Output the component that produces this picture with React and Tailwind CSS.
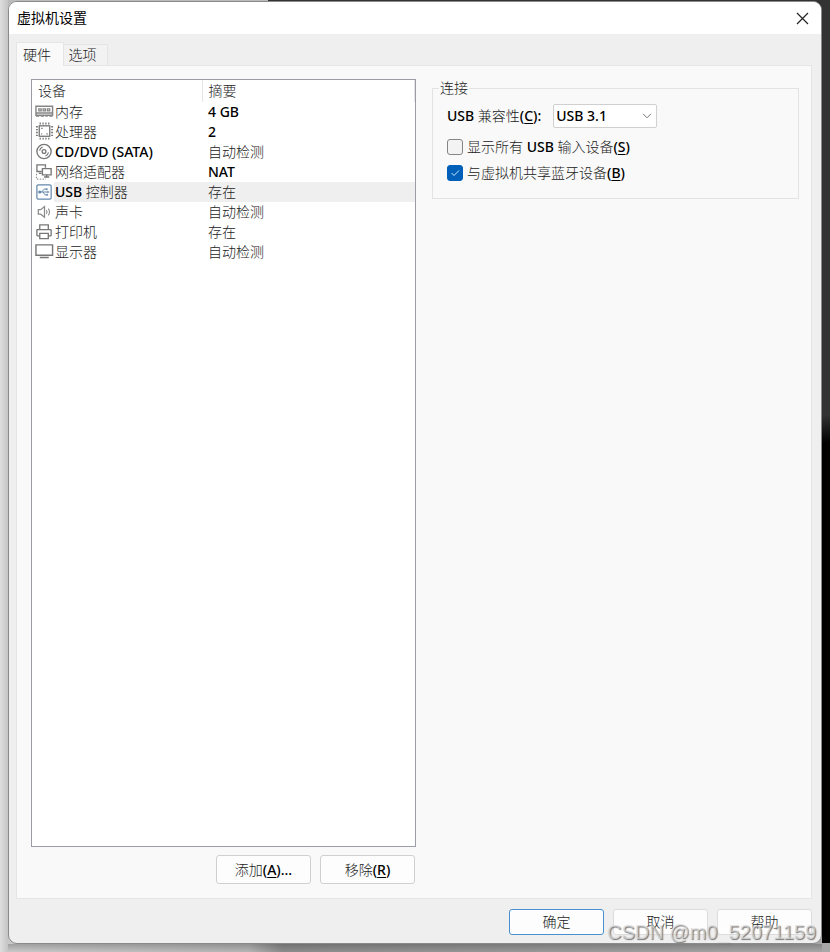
import { useState } from "react";

const sans = 'font-["Noto_Sans","Noto_Sans_CJK_SC",sans-serif]';

function MemoryIcon() {
  return (
    <svg width="20" height="18" viewBox="0 0 20 18" fill="none" stroke="#858585" strokeWidth="1.500">
      <path d="M1 3h17.500v9.500H1zM1 10h17.500" />
      <path d="M4 5.700h2.500v2H4zM8.500 5.700H11v2H8.500zM13 5.700h2.500v2H13z" strokeWidth="1.300" />
      <path d="M1 13h3.500M6 13h3.500M11 13h2.500M15 13h3.500" strokeWidth="1.800" />
    </svg>
  );
}

function CpuIcon() {
  return (
    <svg width="20" height="20" viewBox="0 1 20 20" fill="none" stroke="#777" strokeWidth="1.400">
      <rect x="4.500" y="4.500" width="11" height="11" />
      <path d="M5.500 1v2M8.500 1v2M11.500 1v2M14.500 1v2M5.500 17v2M8.500 17v2M11.500 17v2M14.500 17v2" />
      <path d="M1 5.500h2M1 8.500h2M1 11.500h2M1 14.500h2M17 5.500h2M17 8.500h2M17 11.500h2M17 14.500h2" />
      <path d="M6.500 7.200H8M12 13h1.500M6.500 13h1" />
    </svg>
  );
}

function DiscIcon() {
  return (
    <svg width="20" height="18" viewBox="0 0 20 18" fill="none" stroke="#777" strokeWidth="1.400">
      <circle cx="9.500" cy="8.500" r="7.500" />
      <circle cx="9.500" cy="8.500" r="2" />
      <path d="M4.800 7.500a5 5 0 0 1 3.200-3.700M14.200 9.500a5 5 0 0 1-3.200 3.700" strokeWidth="1.200" />
    </svg>
  );
}

function NetworkIcon() {
  return (
    <svg width="20" height="18" viewBox="0 0 20 18" fill="none" stroke="#777" strokeWidth="1.400">
      <path d="M7 8.500H2v-7h9v3M4 10.500h3" />
      <path d="M7.800 5.500h9.200v6.500H7.800z" fill="#fff" />
      <path d="M12.300 12v2M9.500 14.300h5.500" />
      <path d="M1.500 11v5.500h10" strokeDasharray="1.500 1.500" strokeWidth="1" />
    </svg>
  );
}

function UsbIcon() {
  return (
    <svg width="20" height="18" viewBox="0 0 20 18" fill="none" stroke="#6488ab" strokeWidth="1.300">
      <rect x="2" y="1.500" width="15" height="15" rx="1.500" />
      <path d="M4 9h10M7 9l2.500-3h2M8.500 9l2 3h1.500" strokeWidth="1" />
      <circle cx="5" cy="9" r="1" fill="#6488ab" />
      <path d="M11.500 5.300h1.500v1.400h-1.500zM12 11.300h1.500v1.400H12z" fill="#6488ab" strokeWidth="0.500" />
      <path d="M13 7.700 15.300 9 13 10.300z" fill="#6488ab" stroke="none" />
    </svg>
  );
}

function SoundIcon() {
  return (
    <svg width="20" height="18" viewBox="0 0 20 18" fill="none" stroke="#8a8a8a" strokeWidth="1.300">
      <path d="M3.500 6.500H6l4-3.300v11.300l-4-3.200H3.500z" />
      <path d="M12 7q1.400 2 0 4M14 5.500q2.600 3.500 0 7" strokeWidth="1.100" />
    </svg>
  );
}

function PrinterIcon() {
  return (
    <svg width="20" height="18" viewBox="0 0 20 18" fill="none" stroke="#777" strokeWidth="1.400">
      <path d="M5 6.500v-5h9v5M5 13H2.500q-.500 0-.500-.500V7q0-.500.500-.500h14q.500 0 .500.500v5.500q0 .500-.500.500H14" />
      <path d="M5 10.500h9v5.500H5z" />
    </svg>
  );
}

function DisplayIcon() {
  return (
    <svg width="20" height="18" viewBox="0 0 20 18" fill="none" stroke="#777" strokeWidth="1.500">
      <path d="M1 1.500h17.500v11H1z" />
      <path d="M5 14.800h9.500" strokeWidth="1.600" />
    </svg>
  );
}

const devices = [
  { name: "内存", summary: "4 GB", Icon: MemoryIcon },
  { name: "处理器", summary: "2", Icon: CpuIcon },
  { name: "CD/DVD (SATA)", summary: "自动检测", Icon: DiscIcon },
  { name: "网络适配器", summary: "NAT", Icon: NetworkIcon },
  { name: "USB 控制器", summary: "存在", Icon: UsbIcon },
  { name: "声卡", summary: "自动检测", Icon: SoundIcon },
  { name: "打印机", summary: "存在", Icon: PrinterIcon },
  { name: "显示器", summary: "自动检测", Icon: DisplayIcon },
];

// Chinese runs are drawn lighter than the Latin ones next to them
function Mixed({ text }) {
  return text.split(/([\u4e00-\u9fff]+)/).map((part, i) => (
    <span key={i} className={i % 2 ? "font-light text-[#222]" : "font-medium text-black"}>
      {part}
    </span>
  ));
}

function Accel({ letter }) {
  return (
    <span className="font-medium text-black">
      (<u className="underline-offset-2">{letter}</u>)
    </span>
  );
}

function DeviceTable() {
  const [selected, setSelected] = useState(4);

  return (
    <div className="flex-1 border border-[#9a9ca8] bg-white">
      <table className="w-full table-fixed border-collapse text-left leading-5">
        <colgroup>
          <col className="w-[22px]" />
          <col className="w-[148px]" />
          <col />
        </colgroup>
        <thead>
          <tr className="h-[22px]">
            <th colSpan={2} className="border-r border-[#e5e5e5] p-0 pl-1.5 font-light">
              <Mixed text="设备" />
            </th>
            <th className="border-r border-[#e5e5e5] p-0 pl-1.5 font-light">
              <Mixed text="摘要" />
            </th>
          </tr>
        </thead>
        <tbody>
          {devices.map(({ name, summary, Icon }, i) => (
            <tr key={name} className="h-5" onClick={() => setSelected(i)}>
              <td className="p-0 pl-[3px]">
                <div className="flex h-5 items-center">
                  <Icon />
                </div>
              </td>
              <td className={`p-0 pl-px whitespace-nowrap ${i === selected ? "bg-[#efefef]" : ""}`}>
                <Mixed text={name} />
              </td>
              <td className={`p-0 pl-1.5 ${i === selected ? "bg-[#efefef]" : ""}`}>
                <Mixed text={summary} />
              </td>
            </tr>
          ))}
        </tbody>
      </table>
    </div>
  );
}

function Button({ children, className = "h-[29px] border-[#d0d0d0]" }) {
  return (
    <button type="button" className={`w-[95px] rounded-[3px] border bg-[#fdfdfd] leading-5 ${className}`}>
      {children}
    </button>
  );
}

function CheckBox({ id, defaultChecked, children }) {
  return (
    <div className="flex h-[26px] items-center gap-1">
      <span className="grid">
        <input
          id={id}
          type="checkbox"
          defaultChecked={defaultChecked}
          className="peer col-start-1 row-start-1 size-4 appearance-none rounded-[3px] border border-[#858585] bg-[#f3f3f3] checked:border-[#005fb8] checked:bg-[#005fb8]"
        />
        <svg
          viewBox="0 0 16 16"
          className="pointer-events-none col-start-1 row-start-1 hidden size-4 peer-checked:block"
          fill="none"
          stroke="#d5e8f8"
        >
          <path d="M4.500 8 7 10.500 12 5.500" />
        </svg>
      </span>
      <label htmlFor={id}>{children}</label>
    </div>
  );
}

function ConnectionGroup() {
  return (
    <fieldset className="mt-px min-w-0 flex-1 self-start border border-[#e3e3e3] px-3.5 pb-3">
      <legend className="-ml-2 px-px leading-4">
        <Mixed text="连接" />
      </legend>
      <div className="flex items-center gap-3 pt-2 pb-1.5">
        <label htmlFor="usb-version" className="whitespace-nowrap">
          <Mixed text="USB 兼容性" />
          <Accel letter="C" />
          <span className="font-medium">:</span>
        </label>
        <div className="grid w-[104px] items-center">
          <select
            id="usb-version"
            defaultValue="3.1"
            className="col-start-1 row-start-1 h-6 appearance-none rounded-[2px] border border-[#d0d0d0] bg-white pl-0.5 leading-5 font-medium text-black"
          >
            <option value="1.1">USB 1.1</option>
            <option value="2.0">USB 2.0</option>
            <option value="3.1">USB 3.1</option>
          </select>
          <svg
            viewBox="0 0 10 6"
            className="pointer-events-none col-start-1 row-start-1 mr-[5px] h-1.5 w-2.5 justify-self-end"
            fill="none"
            stroke="#777"
          >
            <path d="M1 .8 5 4.800 9 .8" />
          </svg>
        </div>
      </div>
      <CheckBox id="show-all">
        <Mixed text="显示所有 USB 输入设备" />
        <Accel letter="S" />
      </CheckBox>
      <CheckBox id="share-bluetooth" defaultChecked>
        <Mixed text="与虚拟机共享蓝牙设备" />
        <Accel letter="B" />
      </CheckBox>
    </fieldset>
  );
}

function App() {
  return (
    <div
      className={`${sans} relative flex min-h-screen bg-[linear-gradient(to_right,#c9c9c9,#b5b5b5_30%,#8c8c8c_34%,#a8a8a8)] text-[14px] leading-5`}
    >
      {/* desktop showing around the window */}
      <div className="w-2 bg-[linear-gradient(to_right,#dedede,#c4c4c4)]" />
      <div className="flex flex-1 flex-col bg-[linear-gradient(to_right,#bbb_32%,#333_32%)] bg-[length:100%_20px] bg-no-repeat pt-px">
        <div className="flex flex-1 flex-col overflow-hidden rounded-[9px] border border-[#8a8a8a] bg-[#efefef]">
          <header className="flex h-8 items-center justify-between bg-white pr-3 pl-2">
            <h1 className="font-normal text-black">虚拟机设置</h1>
            <button type="button" aria-label="关闭">
              <svg width="13" height="13" viewBox="0 0 13 13" fill="none" stroke="#222" strokeWidth="1.200">
                <path d="M1 1 12 12M12 1 1 12" />
              </svg>
            </button>
          </header>

          <main className="flex flex-1 flex-col pt-2 pr-[9px] pl-[7px]">
            <div role="tablist" className="flex items-end">
              <button
                type="button"
                role="tab"
                aria-selected="true"
                className="z-10 -mb-px h-6 w-12 border border-b-0 border-[#e5e5e5] bg-[#f9f9f9] pr-1.5 leading-5"
              >
                <Mixed text="硬件" />
              </button>
              <button
                type="button"
                role="tab"
                aria-selected="false"
                className="h-[21px] w-11 border border-b-0 border-l-0 border-[#e5e5e5] bg-[#f2f2f2] pr-1.5 leading-5"
              >
                <Mixed text="选项" />
              </button>
            </div>

            <div className="flex flex-1 gap-4 border border-[#e5e5e5] bg-[#f9f9f9] pt-[13px] pr-3 pb-3.5 pl-3.5">
              <section className="flex w-[385px] flex-col gap-2">
                <DeviceTable />
                <div className="flex justify-end gap-[9px] pr-px">
                  <Button>
                    <Mixed text="添加" />
                    <Accel letter="A" />
                    <span className="font-medium">...</span>
                  </Button>
                  <Button>
                    <Mixed text="移除" />
                    <Accel letter="R" />
                  </Button>
                </div>
              </section>
              <ConnectionGroup />
            </div>
          </main>

          <footer className="flex justify-end gap-[9px] pt-2.5 pr-[9px] pb-2">
            <Button className="h-[26px] border-[#4a90cf]">
              <Mixed text="确定" />
            </Button>
            <Button className="h-[26px] border-[#dcdcdc]">
              <Mixed text="取消" />
            </Button>
            <Button className="h-[26px] border-[#dcdcdc]">
              <Mixed text="帮助" />
            </Button>
          </footer>
        </div>
        <div className="h-2 bg-[linear-gradient(to_bottom,#0003,#0000)]" />
      </div>
      <div className="mb-[9px] w-2 bg-[linear-gradient(to_bottom,#333_0,#333_44%,#000_47%)]" />

      <p className='absolute right-[14px] bottom-2 font-["Liberation_Sans",sans-serif] text-[20px] leading-6 text-[#dcdcdc]/70 [text-shadow:1px_1px_1px_#777]'>
        CSDN @m0_52071159
      </p>
    </div>
  );
}

export default App;
